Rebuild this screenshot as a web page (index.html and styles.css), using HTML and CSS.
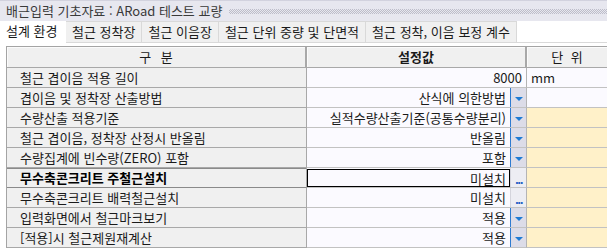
FILE: index.html
```html
<!DOCTYPE html>
<html lang="ko">
<head>
<meta charset="utf-8">
<link rel="stylesheet" href="styles.css">
</head>
<body>
<div class="titlebar">
  <span class="title">배근입력 기초자료 : ARoad 테스트 교량</span>
  <span class="dots"></span>
</div>
<div class="tabs">
  <div class="tab active">설계 환경</div>
  <div class="tab">철근 정착장</div>
  <div class="tab">철근 이음장</div>
  <div class="tab">철근 단위 중량 및 단면적</div>
  <div class="tab">철근 정착, 이음 보정 계수</div>
</div>
<div class="grid">
  <div class="hcell"><span class="wide">구 분</span></div>
  <div class="hcell bold">설정값</div>
  <div class="hcell"><span class="wide2">단 위</span></div>

  <div class="label">철근 겹이음 적용 길이</div>
  <div class="value"><span class="txt">8000</span></div>
  <div class="unit">mm</div>

  <div class="label">겹이음 및 정착장 산출방법</div>
  <div class="value"><span class="txt">산식에 의한방법</span><span class="drop"></span></div>
  <div class="unit"></div>

  <div class="label">수량산출 적용기준</div>
  <div class="value"><span class="txt">실적수량산출기준(공통수량분리)</span><span class="drop"></span></div>
  <div class="unit yellow"></div>

  <div class="label">철근 겹이음, 정착장 산정시 반올림</div>
  <div class="value"><span class="txt">반올림</span><span class="drop"></span></div>
  <div class="unit yellow"></div>

  <div class="label">수량집계에 빈수량(ZERO) 포함</div>
  <div class="value"><span class="txt">포함</span><span class="drop"></span></div>
  <div class="unit yellow"></div>

  <div class="label selected bold">무수축콘크리트 주철근설치</div>
  <div class="value"><span class="txt focus">미설치</span><span class="more">...</span></div>
  <div class="unit yellow"></div>

  <div class="label">무수축콘크리트 배력철근설치</div>
  <div class="value"><span class="txt">미설치</span><span class="more">...</span></div>
  <div class="unit yellow"></div>

  <div class="label">입력화면에서 철근마크보기</div>
  <div class="value"><span class="txt">적용</span><span class="drop"></span></div>
  <div class="unit yellow"></div>

  <div class="label">[적용]시 철근제원재계산</div>
  <div class="value"><span class="txt">적용</span><span class="drop"></span></div>
  <div class="unit yellow"></div>
</div>
</body>
</html>
```
FILE: styles.css
```css
* { box-sizing: border-box; }
html, body {
  margin: 0;
  padding: 0;
  background: #ffffff;
  width: 607px;
  height: 248px;
  overflow: hidden;
}
body {
  font-family: "Noto Sans CJK KR", "Noto Sans", sans-serif;
  font-size: 13px;
  color: #1a1a1a;
}
.titlebar {
  height: 21px;
  background: #e7e7ef;
  border-top: 1px solid #d2d2de;
  display: flex;
  align-items: center;
  padding-left: 6px;
}
.title {
  color: #3a3a3a;
  white-space: nowrap;
  line-height: 20px;
}
.dots {
  flex: 1;
  height: 5px;
  margin-left: 7px;
  background-image: repeating-conic-gradient(#bdbdc9 0 25%, transparent 0 50%);
  background-size: 2px 2px;
}
.tabs {
  height: 22px;
  display: flex;
  border-bottom: 1px solid #d9d9d9;
}
.tab {
  height: 22px;
  line-height: 20px;
  padding: 0 6px;
  background: #f0f0f0;
  border: 1px solid #d9d9d9;
  border-left: none;
  white-space: nowrap;
  color: #1a1a1a;
}
.tab.active {
  background: #ffffff;
  border: none;
  height: 22px;
  padding: 0 6px 0 6px;
  width: 66px;
}
.grid {
  margin: 3px 0 0 6px;
  display: grid;
  grid-template-columns: 300px 220px 82px;
  grid-auto-rows: 20px;
  grid-template-rows: 21px;
  border-top: 1px solid #a4a4a4;
  border-left: 1px solid #a4a4a4;
}
.hcell {
  background: #f0f0f0;
  border-right: 2px solid #a8a8a8;
  border-bottom: 1px solid #a8a8a8;
  box-shadow: inset 1px 1px 0 #fbfbfb;
  text-align: center;
  line-height: 19px;
  color: #1a1a1a;
}
.wide { word-spacing: 6px; }
.wide2 { word-spacing: 4px; }
.bold { font-weight: bold; }
.label {
  background: #f0f0f0;
  border-right: 1px solid #a8a8a8;
  border-bottom: 1px solid #a8a8a8;
  padding-left: 13px;
  line-height: 19px;
  white-space: nowrap;
}
.label.selected {
  border-bottom-color: #8a8a8a;
  box-shadow: inset 0 1px 0 #8a8a8a;
  color: #000;
}
.value {
  background: #fbfaff;
  border-right: 1px solid #b4b4b4;
  border-bottom: 1px solid #c2c2c2;
  display: flex;
  align-items: stretch;
}
.txt {
  flex: 1;
  text-align: right;
  padding-right: 4px;
  line-height: 19px;
  white-space: nowrap;
}
.txt.focus {
  border: 1px solid #000;
  margin: 1px 0 0 0;
  line-height: 17px;
  padding-right: 3px;
}
.drop {
  width: 16px;
  background: #dcdce8;
  border-left: 1px solid #2e7bd0;
  display: flex;
  align-items: center;
  justify-content: center;
}
.drop::after {
  content: "";
  border-left: 4.5px solid transparent;
  border-right: 4.5px solid transparent;
  border-top: 4px solid #1d7ad3;
  margin-top: 2px;
}
.more {
  width: 16px;
  background: #ededf3;
  border-left: 1px solid #d4d4dc;
  color: #1f5fc4;
  font-family: "DejaVu Sans", sans-serif;
  font-size: 10px;
  line-height: 26px;
  text-align: center;
  letter-spacing: -1.5px;
  font-weight: bold;
}
.unit {
  background: #fbfaff;
  border-bottom: 1px solid #c2c2c2;
  padding-left: 4px;
  line-height: 19px;
}
.unit.yellow { background: #fff1c9; }
```
